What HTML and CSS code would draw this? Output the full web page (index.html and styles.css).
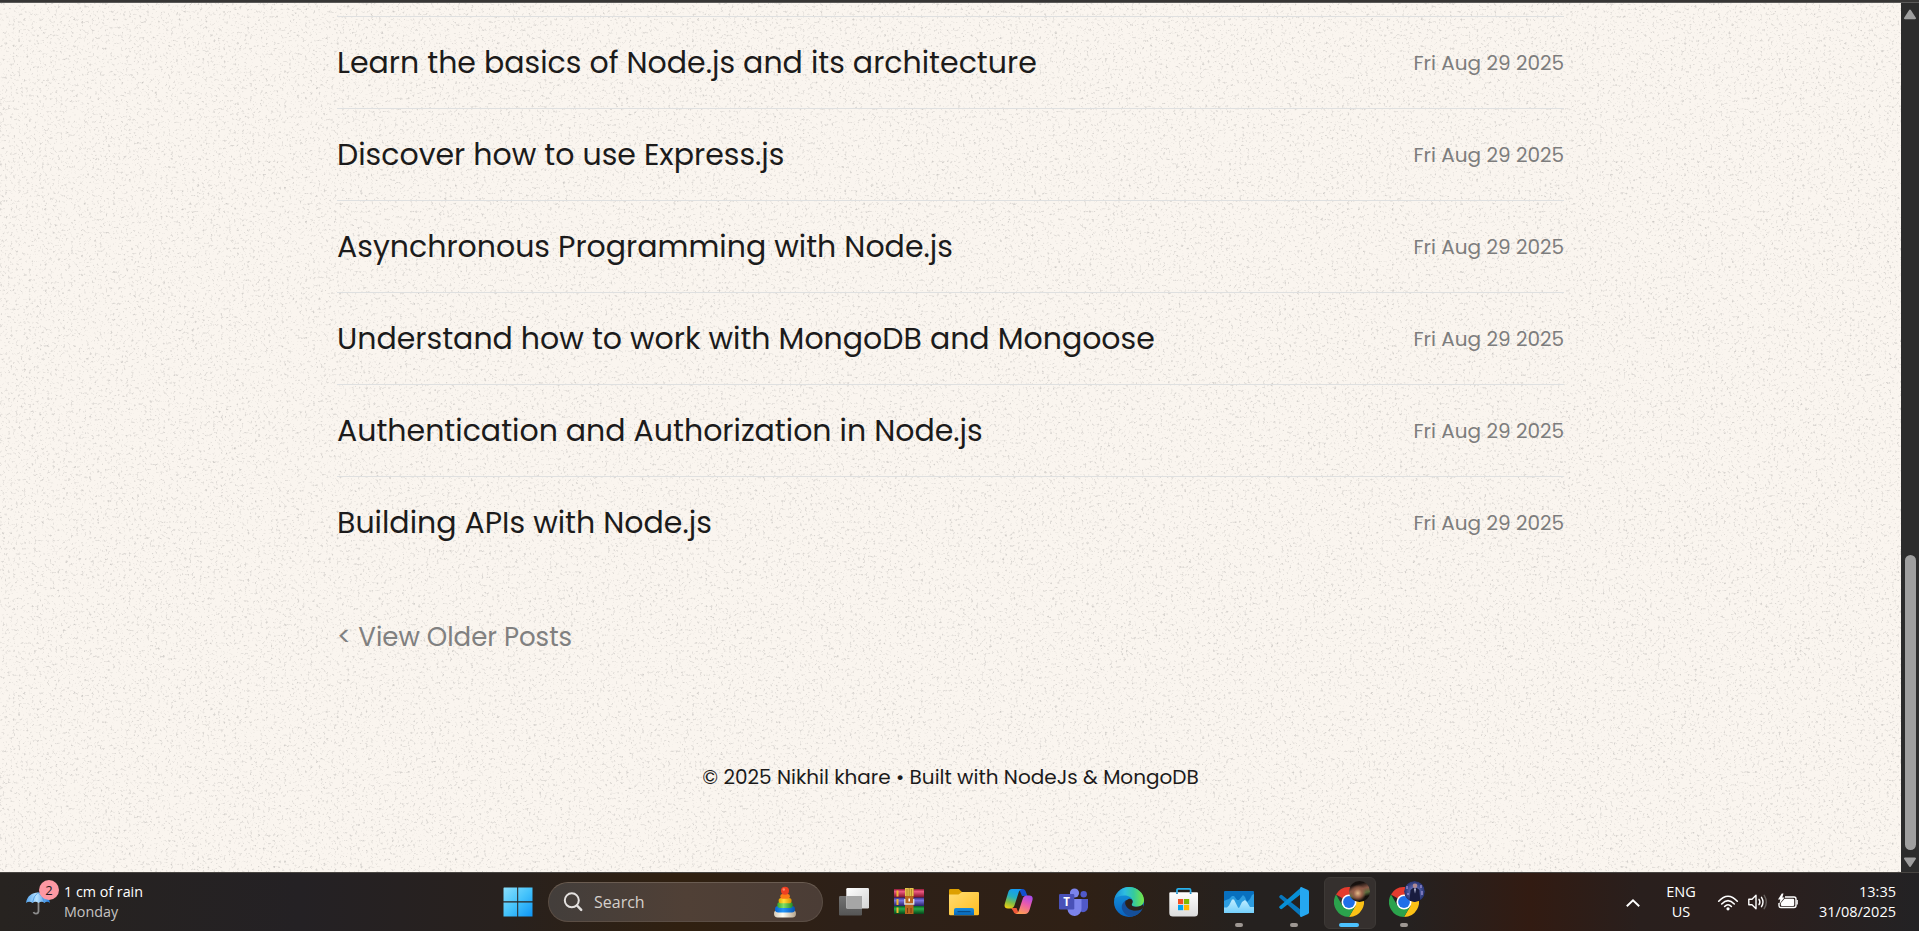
FILE: index.html
```html
<!DOCTYPE html>
<html lang="en">
<head>
<meta charset="utf-8">
<title>Blog</title>
<link rel="stylesheet" href="styles.css">
</head>
<body>
<div class="screen">
  <div class="window-edge"></div>
  <div class="viewport">
    <div class="page">
      <svg class="grain" width="1901" height="869" aria-hidden="true">
        <filter id="grain" x="0" y="0" width="100%" height="100%" color-interpolation-filters="sRGB">
          <feTurbulence type="fractalNoise" baseFrequency="0.38" numOctaves="3" seed="8"/>
          <feColorMatrix values="0 0 0 0 0.68  0 0 0 0 0.67  0 0 0 0 0.66  1.7 0 0 0 -0.98"/>
        </filter>
        <rect width="100%" height="100%" filter="url(#grain)"/>
      </svg>
      <main class="content">
        <ul class="posts">
          <li class="post"><a class="title">Learn the basics of Node.js and its architecture</a><span class="date">Fri Aug 29 2025</span></li>
          <li class="post"><a class="title">Discover how to use Express.js</a><span class="date">Fri Aug 29 2025</span></li>
          <li class="post"><a class="title">Asynchronous Programming with Node.js</a><span class="date">Fri Aug 29 2025</span></li>
          <li class="post"><a class="title">Understand how to work with MongoDB and Mongoose</a><span class="date">Fri Aug 29 2025</span></li>
          <li class="post"><a class="title">Authentication and Authorization in Node.js</a><span class="date">Fri Aug 29 2025</span></li>
          <li class="post"><a class="title">Building APIs with Node.js</a><span class="date">Fri Aug 29 2025</span></li>
        </ul>
        <a class="older">&lt; View Older Posts</a>
        <footer class="footer"><span>© 2025 Nikhil khare • Built with NodeJs &amp; MongoDB</span></footer>
      </main>
    </div>
    <div class="scrollbar">
      <svg width="14" height="11" viewBox="0 0 14 11"><path d="M7 1.500 12 9.200H2Z" fill="#9f9f9f" stroke="#9f9f9f" stroke-width="2" stroke-linejoin="round"/></svg>
      <div class="thumb"></div>
      <svg width="14" height="11" viewBox="0 0 14 11"><path d="M7 9 12 1.500H2Z" fill="#9f9f9f" stroke="#9f9f9f" stroke-width="2" stroke-linejoin="round"/></svg>
    </div>
  </div>

  <div class="taskbar">
    <div class="weather">
      <svg width="36" height="38" viewBox="0 0 36 38">
        <defs><linearGradient id="umb"><stop offset="0" stop-color="#55a5ee"/><stop offset=".45" stop-color="#b9e2ff"/><stop offset="1" stop-color="#1a78dc"/></linearGradient></defs>
        <path d="M14.500 22V32.500a2.600 2.600 0 0 1-5 .5" fill="none" stroke="#8c8c8c" stroke-width="1.800"/>
        <path d="M2 24C3 17 8 13.500 14 13.500S25 17 26 24c-2-1.600-4-1.600-5.500 0-2-1.600-4-1.600-6 0-2-1.600-4-1.600-6 0-2-1.600-4.500-1.600-6.500 0Z" fill="url(#umb)"/>
        <path d="M8.500 23.500Q9.500 17 14 13.500M20.500 23.500Q19 17 14 13.500" fill="none" stroke="#3b8fe0" stroke-width=".7"/>
      </svg>
      <span class="badge">2</span>
      <div class="weather-text"><div>1 cm of rain</div><div class="dim">Monday</div></div>
    </div>

    <div class="center">
      <svg class="start" width="30" height="30" viewBox="0 0 30 30">
        <defs><linearGradient id="win" gradientUnits="userSpaceOnUse" x1="0" y1="0" x2="30" y2="30"><stop stop-color="#8de0fc"/><stop offset=".5" stop-color="#45c3fb"/><stop offset="1" stop-color="#0b93f5"/></linearGradient></defs>
        <path d="M1 .5H14.200V14.200H.5V1ZM15.200.5H29.500V14.200H15.200ZM.5 15.400H14.200V29.500H.5ZM15.200 15.400H29.500V29.500H15.200Z" fill="url(#win)"/>
      </svg>
      <div class="search">
        <svg width="20" height="20" viewBox="0 0 20 20" fill="none" stroke="#e4e1df" stroke-linecap="round"><circle cx="8.800" cy="8.300" r="7" stroke-width="2"/><path d="m14 13.500 4.200 4.400" stroke-width="2.500"/></svg>
        <span class="search-text">Search</span>
        <svg class="toy" width="24" height="32" viewBox="0 0 24 32">
          <defs>
            <linearGradient id="tw"><stop stop-color="#d8cdbb"/><stop offset=".4" stop-color="#fffdf2"/><stop offset="1" stop-color="#b5a48d"/></linearGradient>
            <linearGradient id="tb"><stop stop-color="#0764cf"/><stop offset=".4" stop-color="#2496f8"/><stop offset="1" stop-color="#0554b4"/></linearGradient>
            <linearGradient id="tg"><stop stop-color="#36a52c"/><stop offset=".4" stop-color="#83e067"/><stop offset="1" stop-color="#218b28"/></linearGradient>
            <linearGradient id="ty"><stop stop-color="#e7a400"/><stop offset=".4" stop-color="#ffe03a"/><stop offset="1" stop-color="#d98b00"/></linearGradient>
          </defs>
          <rect x="1" y="24" width="22" height="7.500" rx="3.700" fill="url(#tw)"/>
          <rect x="2" y="20" width="20" height="6.400" rx="3.200" fill="url(#tb)"/>
          <rect x="4.200" y="16" width="15.600" height="6" rx="3" fill="url(#tg)"/>
          <rect x="5.600" y="12" width="13" height="5.300" rx="2.600" fill="url(#ty)"/>
          <rect x="7.300" y="8" width="9.600" height="4.700" rx="2.300" fill="#fb7a15"/>
          <circle cx="12" cy="4.800" r="4" fill="#ee3f22"/><circle cx="10.800" cy="3.500" r="1.200" fill="#ff8465"/>
        </svg>
      </div>
      <div class="apps">
        <div class="app"><svg width="30" height="30" viewBox="0 0 30 30">
          <defs><linearGradient id="tv" x2="1" y2="1"><stop stop-color="#fff"/><stop offset="1" stop-color="#d4d4d4"/></linearGradient><linearGradient id="tv2" x2="0" y2="1"><stop stop-color="#727272"/><stop offset="1" stop-color="#555"/></linearGradient></defs>
          <rect y="9" width="23" height="19.500" rx="1.200" fill="url(#tv2)"/><rect x="7.300" y="1" width="22.700" height="20.500" rx="1.200" fill="url(#tv)"/><path d="M7.300 9H23V21.500H7.300Z" fill="#a6a6a6"/></svg></div>
        <div class="app"><svg width="30" height="30" viewBox="0 0 30 30">
          <defs>
            <linearGradient id="r1" x2="0" y2="1"><stop stop-color="#8e1735"/><stop offset=".3" stop-color="#ed5b82"/><stop offset="1" stop-color="#7c0c25"/></linearGradient>
            <linearGradient id="r2" x2="0" y2="1"><stop stop-color="#393089"/><stop offset=".35" stop-color="#7774df"/><stop offset="1" stop-color="#282068"/></linearGradient>
            <linearGradient id="r3" x2="0" y2="1"><stop stop-color="#095f22"/><stop offset=".35" stop-color="#28ac49"/><stop offset="1" stop-color="#06451a"/></linearGradient>
          </defs>
          <rect y="2" width="30" height="8.500" fill="url(#r1)"/><rect y="10.500" width="30" height="8.500" fill="url(#r2)"/><rect y="19" width="30" height="8" fill="url(#r3)"/>
          <path d="M2.500 3.500h2v6h-2zM2.500 12h2v6h-2zM2.500 20.500h2v5.500h-2z" fill="#efb632"/>
          <rect x="11" y="1.500" width="8.500" height="25.500" fill="#b8651e"/><path d="M11 1h8.500v8H11z" fill="#e6c44c"/><path d="M13 2v7m2.200-8v8m2.200-7v7" stroke="#9a701d" stroke-width=".7"/>
          <path d="M10.800 12v5h8.900v-5" fill="none" stroke="#dedcd8" stroke-width="1.400"/><path d="M15.200 11.500v3" stroke="#fff" stroke-width="1.500"/><path d="M13.500 21v5M17 21v5" stroke="#7a3b10"/>
        </svg></div>
        <div class="app"><svg width="30" height="30" viewBox="0 0 30 30">
          <defs><linearGradient id="fd" x2="1" y2="1"><stop stop-color="#ffdc72"/><stop offset="1" stop-color="#ffbd20"/></linearGradient><linearGradient id="fb" x2="0" y2="1"><stop stop-color="#188bdd"/><stop offset="1" stop-color="#0767b8"/></linearGradient></defs>
          <path d="M0 3.200Q0 2 1.200 2H9.800l3.400 3.200V10H0Z" fill="#dda000"/><path d="M0 7.500H9.500L13 5H29q1 0 1 1V27q0 1.300-1.300 1.300H1.300Q0 28.300 0 27Z" fill="url(#fd)"/><path d="M5 28.300V23q0-2 2-2H23q2 0 2 2v5.300Z" fill="url(#fb)"/><path d="M8.500 24.700H21.500" stroke="#06437a" stroke-width="1"/>
        </svg></div>
        <div class="app"><svg width="30" height="30" viewBox="0 0 30 30">
          <defs>
            <linearGradient id="c1" x1=".5" x2=".2" y2="1"><stop stop-color="#159cf2"/><stop offset=".38" stop-color="#25afbe"/><stop offset=".68" stop-color="#83bd44"/><stop offset="1" stop-color="#f4cf11"/></linearGradient>
            <linearGradient id="c2" x1=".7" x2=".3" y2="1"><stop stop-color="#a94bea"/><stop offset=".45" stop-color="#ec5caa"/><stop offset="1" stop-color="#ffa052"/></linearGradient>
          </defs>
          <path d="M15 2h3.500c2 0 3 1.300 3.600 3.400L23.500 9H18Z" fill="#1450cf"/><path d="M7 21l5.500 0L15 27h-2c-2 0-3.200-1-3.800-3Z" fill="#ef5838"/>
          <path d="M8 2h10c-2 .5-3 2-3.700 4.500l-3.600 11.300c-.8 2.500-2 3.700-4.500 3.700H4c-3 0-4-2-3.200-4.800L4 6C4.700 3.500 5.800 2 8 2Z" fill="url(#c1)"/>
          <path d="M21 27H11.500c2-.5 3-2 3.700-4.500l3.400-10.300C19.400 9.700 20.500 8.500 23 8.500h2.200c3 0 4 2 3.200 4.800L25.500 23c-.9 2.600-2.300 4-4.500 4Z" fill="url(#c2)"/>
        </svg></div>
        <div class="app"><svg width="30" height="30" viewBox="0 0 30 30">
          <circle cx="24.700" cy="7.200" r="3.200" fill="#5059c9"/><path d="M21 12h8v8.500a5 5 0 0 1-8 3.600Z" fill="#5059c9"/><circle cx="15.500" cy="6" r="4.600" fill="#7b83eb"/><path d="M8 12h14.500v9.500a7 7 0 0 1-14 1Z" fill="#7b83eb"/><rect y="7" width="15.300" height="15.500" rx="1.300" fill="#4951b8"/><text x="7.600" y="18.700" text-anchor="middle" class="teams-t">T</text>
        </svg></div>
        <div class="app"><svg width="30" height="30" viewBox="0 0 30 30">
          <defs><linearGradient id="e1" x1="0" x2="1"><stop stop-color="#168ed9"/><stop offset=".35" stop-color="#2ebde0"/><stop offset=".65" stop-color="#35ca9d"/><stop offset="1" stop-color="#77e744"/></linearGradient><linearGradient id="e2" x2="0" y2="1"><stop stop-color="#169de1"/><stop offset="1" stop-color="#0961be"/></linearGradient></defs>
          <circle cx="15" cy="15" r="15" fill="url(#e2)"/>
          <path d="M.5 12C2 5 8 0 15 0c8 0 15 6 15 13 0 4-3 6.800-7.300 6.800-3.500 0-5-1.200-5-2.200 0-.8 1-1 1-3C18.700 11 15 8.500 10.500 8.500 6 8.500 2.500 10 .5 12Z" fill="url(#e1)"/>
          <path d="M12.800 13c-4.800 2-6 6.500-4.300 10.200C10.200 27 14 29.400 17.500 29.800 22 29 26 26.300 28 22.500c-6.500 3-14.300.5-15.700-5-.4-1.700-.2-3 .5-4.500Z" fill="#154f9a"/>
          <path d="M13 13.200c1-1.500 3-2 4.500-1 1.600 1.200 1.500 3 .5 4.500-.8 1.600.5 3.100 4.500 3.100 3 0 5-.9 6.500-2.500l.8 3.200-2.300 2c-6.500 3-14.300.6-16-4.700-.6-1.700-.3-3.200.5-4.600Z" fill="#2d2119"/>
        </svg></div>
        <div class="app"><svg width="30" height="30" viewBox="0 0 30 30">
          <defs><linearGradient id="st" x2="0" y2="1"><stop stop-color="#fff"/><stop offset="1" stop-color="#dcdcdc"/></linearGradient></defs>
          <path d="M8 7V3q0-1.200 1.200-1.200H20.400q1.200 0 1.200 1.200v4" fill="none" stroke="#28b1ee" stroke-width="1.700"/><path d="M1.200 5.300H28q1 0 1 1V26q0 3.500-3.500 3.500H4Q.3 29.500.3 26V6.300q0-1 1-1Z" fill="url(#st)"/><path d="M8 5.300V7M21.600 5.300V7" stroke="#168bc8" stroke-width="1.700"/>
          <path d="M9 12h5.200v5.200H9z" fill="#f25022"/><path d="M15 12h5.200v5.200H15z" fill="#7fba00"/><path d="M9 18h5.200v5.200H9z" fill="#00a4ef"/><path d="M15 18h5.200v5.200H15z" fill="#ffb900"/>
        </svg></div>
        <div class="app run"><svg width="30" height="30" viewBox="0 0 30 30">
          <defs><linearGradient id="tm" x2="0" y2="1"><stop stop-color="#c2edff"/><stop offset="1" stop-color="#74d0fc"/></linearGradient></defs>
          <rect y="4" width="30" height="22" rx="1" fill="#0870bf"/><path d="M0 14 2 13l3-1 3-3h2l3 4h2l4-5 2 2 2 5 3-3 2-4 2-1V26H0Z" fill="#2d9de0"/><path d="M0 20.500h3l2-2 3-6h2l4 8 1 .5 3-6 3-2 2 2 3 5h4V26H0Z" fill="url(#tm)"/>
        </svg></div>
        <div class="app run"><svg width="30" height="30" viewBox="0 0 30 30">
          <path d="M1.200 8.300Q2 7.400 3.200 8.200L24 24.500 22.500 30 .6 10.800Q-.3 9.800.6 8.900Z" fill="#0877bd"/><path d="M1.200 21.700Q2 22.600 3.200 21.800L24 5.500 22.500 0 .6 19.200Q-.3 20.200.6 21.100Z" fill="#078fd5"/><path d="M22.300 0 29 3q1 .5 1 1.700V25.300Q30 26.500 29 27l-6.700 3q-1.300 0-1.300-1.500V1.500Q21 0 22.300 0Z" fill="#25a7f0"/>
        </svg></div>
        <div class="app run active"><svg width="30" height="30" viewBox="0 0 30 30"><g id="chrome"><path d="M15 15 2 7.500A15 15 0 0 1 28 7.500H15Z" fill="#e33b2e"/><path d="M15 7.500H28A15 15 0 0 1 15 30l6.500-11.200Z" fill="#fbc116"/><path d="M2 7.500A15 15 0 0 0 15 30l6.500-11.200L8.500 18.800Z" fill="#2ba24c"/><circle cx="15" cy="15" r="7.500" fill="#fff"/><circle cx="15" cy="15" r="5.900" fill="#1f6fe8"/></g></svg>
          <span class="avatar sunset"></span></div>
        <div class="app run"><svg width="30" height="30" viewBox="0 0 30 30"><use href="#chrome"/></svg>
          <svg class="avatar" width="21" height="21" viewBox="0 0 21 21"><defs><radialGradient id="av"><stop stop-color="#7a86d5"/><stop offset="1" stop-color="#24316f"/></radialGradient></defs><circle cx="10.500" cy="10.500" r="10.500" fill="url(#av)"/><path d="M5.500 19.500 6.500 9 9 7h4l2.500 2 .7 10.500Q11 22.500 5.500 19.500Z" fill="#191c3f"/><circle cx="11" cy="4.800" r="2.300" fill="#b08a92"/><path d="m10 7.500 1 5 1-5" fill="#cbd0ed"/><path d="M3 5v3M17 4v3M18 10v4M4 12v2" stroke="#b9a7ed"/></svg></div>
      </div>
    </div>

    <div class="tray">
      <svg class="chev" width="16" height="10" viewBox="0 0 16 10"><path d="m1.800 8.200 6.200-6 6.200 6" fill="none" stroke="#fff" stroke-width="1.900"/></svg>
      <div class="lang"><div>ENG</div><div>US</div></div>
      <svg class="wifi" width="22" height="18" viewBox="0 0 22 18" fill="none" stroke="#fff" stroke-width="1.600" stroke-linecap="round"><path d="M1.700 7.200Q11-2.800 20.300 7.200M4.700 10Q11 3.200 17.300 10M7.600 12.500Q11 9 14.400 12.500"/><circle cx="11" cy="14.800" r="1.600" fill="#fff" stroke="none"/></svg>
      <svg class="vol" width="22" height="18" viewBox="0 0 22 18" fill="none" stroke="#fff" stroke-width="1.400" stroke-linecap="round" stroke-linejoin="round"><path d="M1.800 6.200H5L9 2.300V15.700L5 11.800H1.800Z"/><path d="M12 6.300Q13.800 9 12 11.700M14.500 4.300Q17.500 9 14.500 13.700"/><path d="M17.200 2.300Q21.400 9 17.200 15.700" stroke="#66605d"/></svg>
      <svg class="bat" width="22" height="18" viewBox="0 0 22 18"><path d="M8 4h9q2 0 2 2v6.500q0 2-2 2H4q-2 0-2-2V10" fill="none" stroke="#fff" stroke-width="1.400"/><path d="M7.500 5.800H16q1.200 0 1.200 1.200v4.700q0 1.200-1.200 1.200H5q-1.200 0-1.200-1.200V10Z" fill="#fff"/><path d="M19.500 7h1.300v4.500h-1.300z" fill="#fff"/><path d="M4.800.5 1 6.500h2.300L2.400 11 7.500 4.500H5.300L6.500.5Z" fill="#fff"/></svg>
      <div class="clock"><div>13:35</div><div>31/08/2025</div></div>
    </div>
  </div>
</div>
</body>
</html>
```

FILE: styles.css
```css
* { box-sizing: border-box; }
body { margin: 0; overflow: hidden; font-family: Poppins, Inter, sans-serif; }
svg { display: block; flex: none; }

.screen { width: 1919px; height: 931px; display: flex; flex-direction: column; }
.window-edge { height: 3px; flex: none; background: #373635; border-bottom: 1px solid #5c5b5a; }

.viewport { height: 869px; display: flex; flex: none; }
.page { position: relative; width: 1901px; background: #faf5ef; overflow: hidden; }
.grain { position: absolute; inset: 0; }
.content { position: relative; width: 1227px; margin: 13px 0 0 337px; }

.posts { list-style: none; margin: 0; padding: 0; }
.post { height: 92px; border-top: 1px solid #dfe0e0; display: flex; align-items: center; justify-content: space-between; white-space: nowrap; }
.title { font-size: 30px; line-height: 45px; color: #1c1b1b; }
.date { font-size: 20px; line-height: 30px; color: #7d7d7d; }
.older { display: block; margin-top: 49px; font-size: 26px; line-height: 40px; color: #808080; white-space: nowrap; }
.footer { margin-top: 105px; text-align: center; font-size: 20px; line-height: 31px; color: #1c1b1b; white-space: nowrap; }

.scrollbar { width: 18px; background: #2c2c2c; display: flex; flex-direction: column; align-items: center; padding: 6px 0 4px; }
.thumb { width: 11px; height: 295px; margin: auto 0 7px; border-radius: 6px; background: #9f9f9f; }

.taskbar {
  height: 59px; flex: none; display: flex; border-top: 1px solid #484542; color: #fff;
  font: 14.500px/20px "Segoe UI", "Open Sans", sans-serif; white-space: nowrap;
  background: linear-gradient(90deg, #272320 0, #242124 300px, #28211e 500px, #302010 680px, #2d2018 850px, #2f2015 1080px, #25211f 1250px, #252120 1410px, #321b12 1530px, #291f1d 1640px, #2b1f1d 1760px, #232224 1919px);
}
.weather { position: relative; width: 503px; padding: 6px 0 0 24px; display: flex; }
.badge { position: absolute; left: 39px; top: 7px; width: 20px; height: 20px; border-radius: 50%; background: #fd98a3; color: #251b1d; text-align: center; font-size: 13px; line-height: 20px; }
.weather-text { padding: 3px 0 0 4px; font-size: 14.300px; }
.dim { color: #c6c3c1; }

.center { display: flex; padding-top: 9px; }
.start { margin: 5px 15px 0 0; }
.search { width: 275px; height: 40px; display: flex; align-items: center; padding: 0 25px 0 14px; border: 1px solid #5b4e45; border-top-color: #6a5c51; border-radius: 20px; background: linear-gradient(90deg, #433e3b, #504036 50%, #4b3d36); }
.search-text { margin-left: 11px; font-size: 16px; color: #d5d0cc; }
.toy { margin-left: auto; }
.apps { display: flex; padding-left: 3px; }
.app { position: relative; width: 55px; height: 49px; padding: 5px 0 0 13px; }
.app > svg:first-child { position: relative; }
.run::after { content: ""; position: absolute; left: 24px; bottom: 4px; width: 8px; height: 4px; border-radius: 2px; background: #9e9792; }
.active::before { content: ""; position: absolute; left: 3px; top: -5px; width: 50px; height: 50px; border: 1px solid #3d3936; border-radius: 6px; background: #35302e; }
.active::after { left: 18px; width: 20px; background: #4cc2ff; }
.app > .avatar { position: absolute; left: 28px; top: -1px; width: 21px; height: 21px; border-radius: 50%; }
.sunset { background: radial-gradient(circle at 42% 58%, #e5bb88 0, #97604a 25%, transparent 48%), linear-gradient(165deg, #17110f 20%, #8a5847 42%, #596c3d 60%, #14100c 75%); }
.teams-t { font: bold 11.500px "Open Sans", sans-serif; fill: #fff; }

.tray { display: flex; margin-left: auto; padding-right: 23px; }
.chev { margin: 25px 0 0 1px; }
.lang { margin: 9px 0 0 18px; width: 44px; text-align: center; }
.wifi { margin: 21px 0 0 14px; }
.vol { margin: 20px 0 0 8px; }
.bat { margin: 20px 0 0 8px; }
.clock { margin-top: 9px; width: 97px; text-align: right; }
```
